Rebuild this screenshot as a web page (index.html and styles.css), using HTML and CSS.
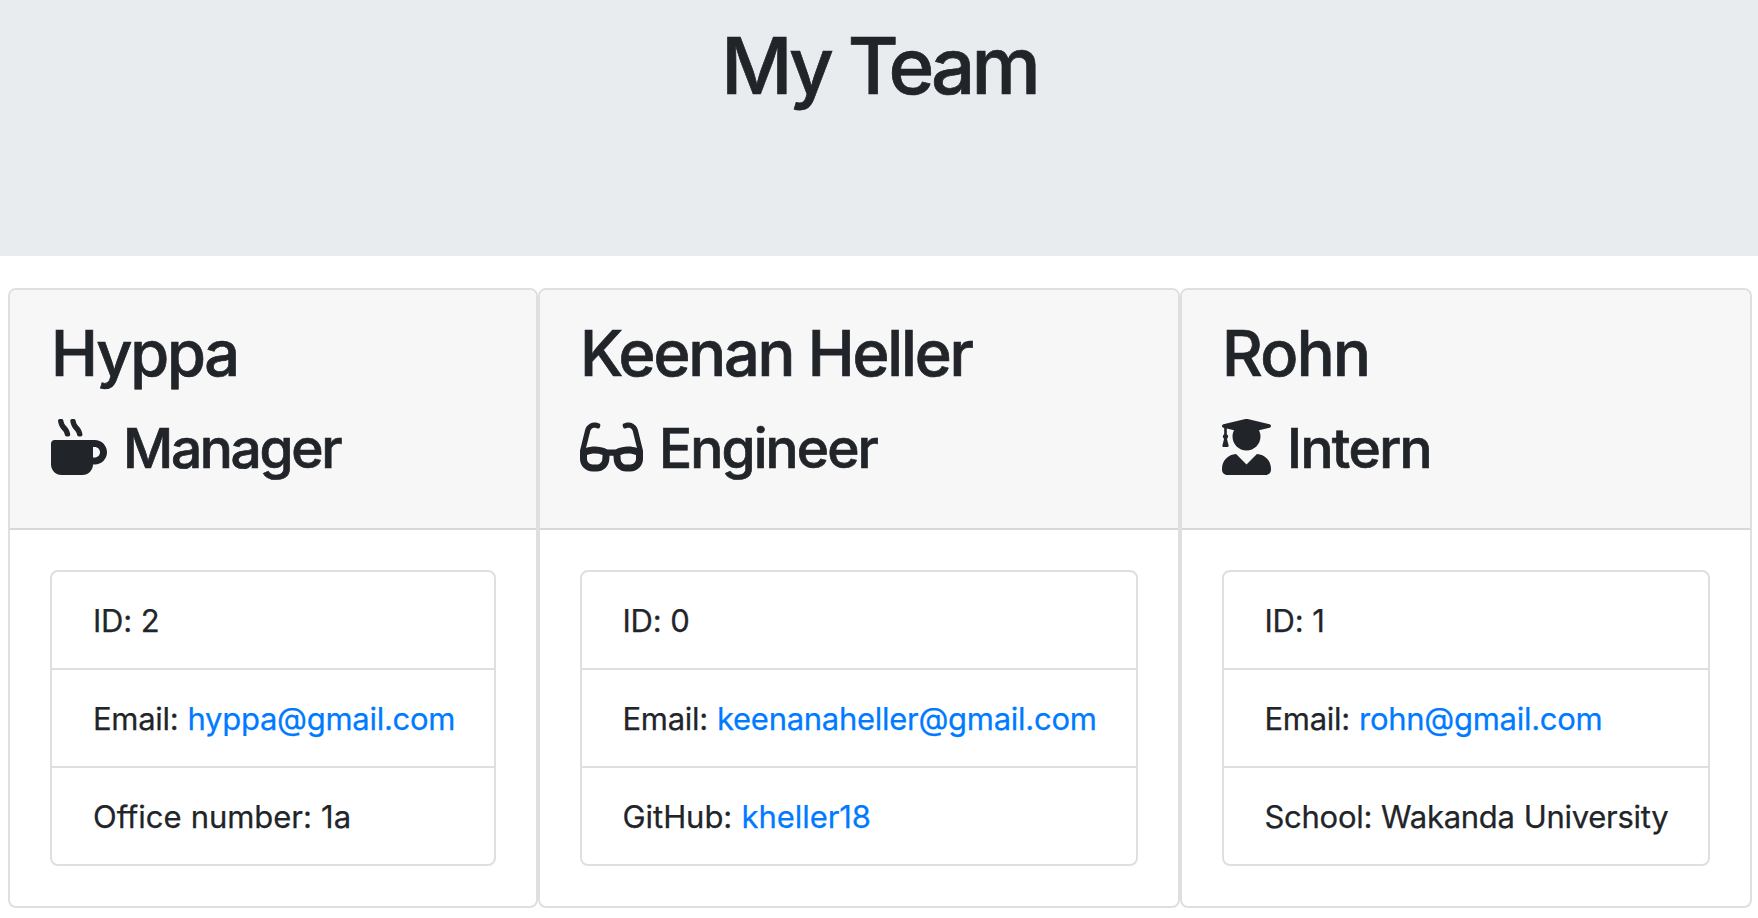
FILE: index.html
```html
<!DOCTYPE html>
<html lang="en">
<head>
<meta charset="utf-8">
<title>My Team</title>
<link rel="stylesheet" href="styles.css">
</head>
<body>
<header class="banner"><h1 class="banner-title">My Team</h1></header>
<main class="team">
  <section class="card card-manager">
    <div class="card-header">
      <h2 class="name">Hyppa</h2>
      <h3 class="role"><svg class="icon" width="56" height="56" viewBox="0 0 512 512"><path d="M127.1 146.5c1.3 7.7 8 13.5 16 13.5h16.5c9.8 0 17.6-8.5 16.3-18-3.8-28.2-16.4-54.2-36.6-74.7-14.4-14.7-23.6-33.3-26.4-53.5C111.8 5.9 105 0 96.8 0H80.4C70.6 0 63 8.5 64.1 18c3.9 31.9 18 61.3 40.6 84.4 12 12.2 19.7 27.5 22.4 44.1zm112 0c1.3 7.7 8 13.5 16 13.5h16.5c9.8 0 17.6-8.5 16.3-18-3.8-28.2-16.4-54.2-36.6-74.7-14.4-14.7-23.6-33.3-26.4-53.5C223.8 5.9 217 0 208.8 0h-16.4c-9.8 0-17.5 8.5-16.3 18 3.9 31.9 18 61.3 40.6 84.4 12 12.2 19.7 27.5 22.4 44.1zM400 192H32c-17.7 0-32 14.3-32 32v192c0 53 43 96 96 96h192c53 0 96-43 96-96h16c61.8 0 112-50.2 112-112s-50.2-112-112-112zm0 160h-16v-96h16c26.5 0 48 21.5 48 48s-21.5 48-48 48z"/></svg><span class="role-label">Manager</span></h3>
    </div>
    <div class="card-body">
      <ul class="details">
        <li>ID: 2</li>
        <li>Email: <a href="mailto:hyppa@gmail.com">hyppa@gmail.com</a></li>
        <li class="loose">Office number: 1a</li>
      </ul>
    </div>
  </section>
  <section class="card card-engineer">
    <div class="card-header">
      <h2 class="name">Keenan Heller</h2>
      <h3 class="role"><svg class="icon" width="63" height="56" viewBox="0 0 576 512"><path d="M574.1 280.37L528.75 98.66c-5.91-23.7-21.59-44.05-43-55.81-21.44-11.73-46.97-14.11-70.19-6.33l-15.25 5.08c-8.39 2.79-12.92 11.86-10.12 20.24l5.06 15.18c2.79 8.38 11.85 12.91 20.23 10.12l13.18-4.39c10.87-3.62 23-3.57 33.16 1.73 10.29 5.37 17.57 14.56 20.37 25.82l38.46 153.82c-22.19-6.81-49.79-12.46-81.2-12.46-34.77 0-73.98 7.02-114.85 26.74h-73.18c-40.87-19.74-80.08-26.75-114.86-26.75-31.42 0-59.02 5.65-81.21 12.46l38.46-153.83c2.79-11.25 10.09-20.45 20.38-25.81 10.16-5.3 22.28-5.35 33.15-1.73l13.17 4.39c8.38 2.79 17.44-1.74 20.23-10.12l5.06-15.18c2.8-8.38-1.73-17.45-10.12-20.24l-15.25-5.08c-23.22-7.78-48.75-5.41-70.19 6.33-21.41 11.77-37.09 32.11-43 55.8L1.9 280.37A64.218 64.218 0 0 0 0 295.86v70.25C0 429.01 51.58 480 115.2 480h37.12c60.28 0 110.37-45.94 114.88-105.37l2.93-38.63h35.75l2.93 38.63C313.31 434.06 363.4 480 423.68 480h37.12c63.62 0 115.2-50.99 115.2-113.88v-70.25c0-5.23-.64-10.43-1.9-15.5zm-370.72 89.42c-1.97 25.91-24.4 46.21-51.06 46.21H115.2C86.97 416 64 393.62 64 366.11v-37.54c18.12-6.49 43.42-12.92 72.58-12.92 23.86 0 47.26 4.33 69.93 12.92l-3.13 41.22zM512 366.12c0 27.51-22.97 49.88-51.2 49.88h-37.12c-26.67 0-49.1-20.3-51.06-46.21l-3.13-41.22c22.67-8.59 46.08-12.92 69.95-12.92 29.12 0 54.43 6.44 72.55 12.93v37.54z"/></svg><span class="role-label">Engineer</span></h3>
    </div>
    <div class="card-body">
      <ul class="details">
        <li>ID: 0</li>
        <li>Email: <a href="mailto:keenanaheller@gmail.com">keenanaheller@gmail.com</a></li>
        <li class="loose">GitHub: <a href="#">kheller18</a></li>
      </ul>
    </div>
  </section>
  <section class="card card-intern">
    <div class="card-header">
      <h2 class="name">Rohn</h2>
      <h3 class="role"><svg class="icon" width="49" height="56" viewBox="0 0 448 512"><path d="M319.4 320.6L224 416l-95.4-95.4C57.1 323.7 0 382.2 0 454.4v9.6c0 26.5 21.5 48 48 48h352c26.5 0 48-21.5 48-48v-9.6c0-72.2-57.1-130.7-128.6-133.8zM13.6 79.8l6.4 1.5v58.4c-7 4.2-12 11.5-12 20.3 0 8.4 4.6 15.4 11.1 19.7L3.5 242c-1.7 6.9 2.1 14 7.6 14h41.8c5.5 0 9.3-7.1 7.6-14l-15.6-62.3C51.4 175.4 56 168.4 56 160c0-8.8-5-16.1-12-20.3V87.1l66 15.9c-8.6 17.2-14 36.4-14 57 0 70.7 57.3 128 128 128s128-57.3 128-128c0-20.6-5.3-39.8-14-57l96.3-23.2c18.2-4.4 18.2-27.1 0-31.5l-190.4-46c-13-3.1-26.7-3.1-39.7 0L13.6 48.2c-18.1 4.4-18.1 27.2 0 31.6z"/></svg><span class="role-label">Intern</span></h3>
    </div>
    <div class="card-body">
      <ul class="details">
        <li>ID: 1</li>
        <li>Email: <a href="mailto:rohn@gmail.com">rohn@gmail.com</a></li>
        <li>School: Wakanda University</li>
      </ul>
    </div>
  </section>
</main>
</body>
</html>
```
FILE: styles.css
```css
* { box-sizing: border-box; }
body {
  margin: 0;
  background: #fff;
  color: #212529;
  font-family: Inter, "Liberation Sans", sans-serif;
  font-size: 31px;
  line-height: 48px;
}
h1, h2, h3, ul { margin: 0; padding: 0; font-weight: 500; }
h1, h2, h3 { -webkit-text-stroke: 0.7px currentColor; }
.banner { height: 256px; padding-top: 18px; background: #e8ecef; text-align: center; }
.banner-title { font-size: 78px; line-height: 96px; letter-spacing: -4px; word-spacing: 1px; }
.team { display: flex; margin: 32px 0 0 8px; }
.card { flex: none; height: 620px; border: 2px solid #dfdfdf; border-radius: 8px; overflow: hidden; }
.card-manager { width: 530px; }
.card-engineer { width: 642px; }
.card-intern { width: 572px; }
.card-header { height: 240px; padding: 25px 40px 0; background: #f7f7f7; border-bottom: 2px solid #d8d8d8; }
.card-manager .card-header { padding-left: 41px; }
.name { font-size: 63px; line-height: 77px; letter-spacing: -2.2px; white-space: nowrap; }
.role { display: flex; align-items: center; gap: 16px; margin-top: 21px; font-size: 55px; line-height: 68px; letter-spacing: -1.9px; }
.card-manager .role { letter-spacing: -2.3px; }
.card-intern .name, .card-intern .role { letter-spacing: -1.6px; }
.role-label { padding-top: 1px; margin-bottom: -1px; }
.icon { flex: none; fill: currentColor; stroke: none; }
.card-body { padding: 40px; }
.details { list-style: none; border: 2px solid #dfdfdf; border-radius: 8px; font-weight: 400; letter-spacing: -0.28px; word-spacing: 0.6px; -webkit-text-stroke: 0.25px; }
.details li { height: 98px; padding: 25px 0 0 40.5px; border-bottom: 2px solid #dfdfdf; white-space: nowrap; }
.card-manager .details li { padding-left: 41px; }
.details li:last-child { height: 96px; border-bottom: 0; }
.details .loose { letter-spacing: -0.05px; }
.details a { color: #007bff; text-decoration: none; }
```
